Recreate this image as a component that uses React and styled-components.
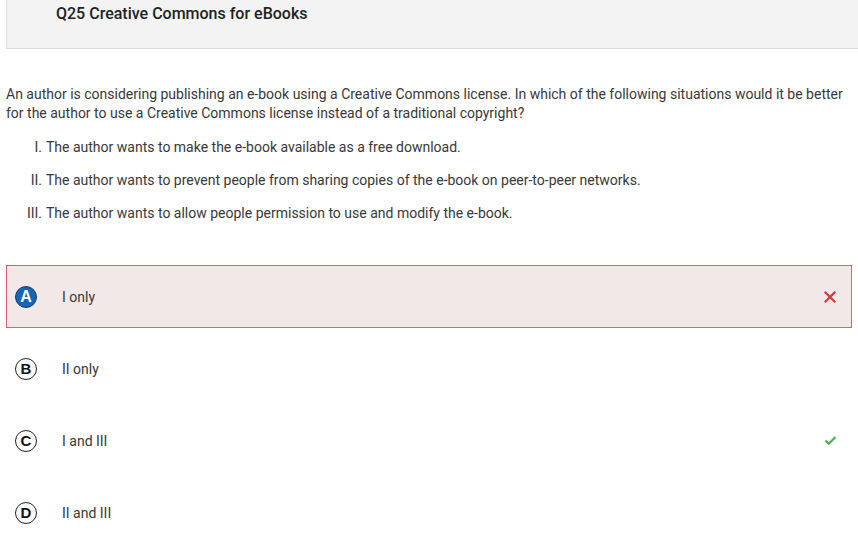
import * as React from "react"
import styled, { createGlobalStyle } from "styled-components"

const GlobalStyle = createGlobalStyle`
    body {
        margin: 0;
        background: #ffffff;
        font-family: Roboto, "Liberation Sans", sans-serif;
        color: #333333;
    }
`

const Page = styled.div`
    width: 858px;
    overflow: hidden;
`

const Header = styled.div`
    margin: -1px 0 0 6px;
    height: 50px;
    background: #f3f3f3;
    border: 1px solid #dcdcdc;
    border-right: none;
    box-sizing: border-box;
    padding: 4px 0 0 49px;
`

const Title = styled.h1`
    margin: 0;
    font-size: 16px;
    font-weight: 500;
    line-height: 19px;
    color: #222222;
`

const Body = styled.div`
    padding: 36px 6px 0 6px;
`

const Question = styled.p`
    margin: 0;
    font-size: 14px;
    line-height: 19px;
    color: #383838;
`

const Statements = styled.div`
    display: grid;
    grid-template-columns: 36px 1fr;
    row-gap: 14px;
    column-gap: 4px;
    margin-top: 15px;
    font-size: 14px;
    line-height: 19px;
    color: #383838;
`

const Numeral = styled.span`
    text-align: right;
`

const Options = styled.div`
    display: flex;
    flex-direction: column;
    gap: 9px;
    margin: 42px 6px 0 6px;
`

const Option = styled.div`
    display: flex;
    align-items: center;
    height: 63px;
    box-sizing: border-box;
    padding: 0 14px 0 8px;
    border: 1px solid ${p => (p.$wrong ? "#e0606e" : "transparent")};
    background: ${p => (p.$wrong ? "#f3e8e8" : "transparent")};
`

const Letter = styled.span`
    width: 22px;
    height: 22px;
    box-sizing: border-box;
    border-radius: 50%;
    border: ${p => (p.$selected ? "1.5px solid #1b3a66" : "1px solid #222222")};
    background: ${p => (p.$selected ? "#1765b5" : "#ffffff")};
    color: ${p => (p.$selected ? "#ffffff" : "#111111")};
    display: flex;
    align-items: center;
    justify-content: center;
    font-family: "Liberation Sans", Arial, sans-serif;
    font-size: ${p => (p.$selected ? "16px" : "15px")};
    font-weight: 700;
    line-height: 1;
    flex-shrink: 0;
`

const OptionText = styled.span`
    flex: 1;
    margin-left: 25px;
    font-size: 14px;
    color: #383838;
`

const Mark = styled.span`
    display: flex;
    width: 14px;
    justify-content: center;
`

const Cross = () => (
    <svg width="12" height="12" viewBox="0 0 12 12">
        <path d="M1.5 1.5 L10.5 10.5 M10.5 1.5 L1.5 10.5" stroke="#d2383f" strokeWidth="2.2" strokeLinecap="square" fill="none" />
    </svg>
)

const Check = () => (
    <svg width="13" height="11" viewBox="0 0 13 11">
        <path d="M1.5 5.5 L4.8 8.8 L11.5 2" stroke="#4caf50" strokeWidth="2.2" fill="none" />
    </svg>
)

const statements = [
    ["I.", "The author wants to make the e-book available as a free download."],
    ["II.", "The author wants to prevent people from sharing copies of the e-book on peer-to-peer networks."],
    ["III.", "The author wants to allow people permission to use and modify the e-book."],
]

const options = [
    { letter: "A", text: "I only", selected: true, wrong: true },
    { letter: "B", text: "II only" },
    { letter: "C", text: "I and III", correct: true },
    { letter: "D", text: "II and III" },
]

const App = () => {
    return (
        <Page>
            <GlobalStyle />
            <Header>
                <Title>Q25 Creative Commons for eBooks</Title>
            </Header>
            <Body>
                <Question>
                    An author is considering publishing an e-book using a Creative Commons license. In which of the following situations would it be better for the author to use a Creative Commons license instead of a traditional copyright?
                </Question>
                <Statements>
                    {statements.map(([n, t]) => (
                        <React.Fragment key={n}>
                            <Numeral>{n}</Numeral>
                            <span>{t}</span>
                        </React.Fragment>
                    ))}
                </Statements>
            </Body>
            <Options>
                {options.map(o => (
                    <Option key={o.letter} $wrong={o.wrong}>
                        <Letter $selected={o.selected}>{o.letter}</Letter>
                        <OptionText>{o.text}</OptionText>
                        <Mark>
                            {o.wrong && <Cross />}
                            {o.correct && <Check />}
                        </Mark>
                    </Option>
                ))}
            </Options>
        </Page>
    )
}

export default App
